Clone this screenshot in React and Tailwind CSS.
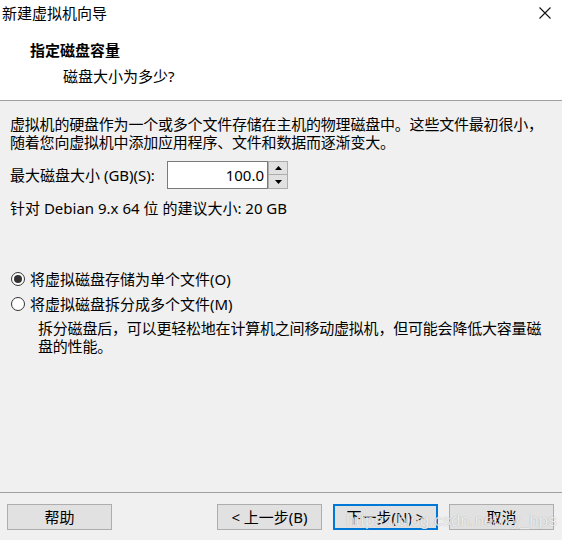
import React, { useState } from "react";

const font = { fontFamily: '"Noto Sans", "Noto Sans CJK SC", sans-serif' };

const Radio = ({ checked, label, onClick }) => (
  <div onClick={onClick} className="flex flex-row items-center h-[20px] cursor-default">
    <div className="ml-[1px] w-[14px] h-[14px] rounded-full border border-[#333333] bg-white flex items-center justify-center">
      {checked && <div className="w-[8px] h-[8px] rounded-full bg-[#333333]" />}
    </div>
    <span className="ml-[5px] text-[15px] leading-[20px] text-black">{label}</span>
  </div>
);

const Button = ({ children, primary }) => (
  <div
    className={
      "w-[105px] h-[26px] flex items-center justify-center text-[15px] text-black bg-[#e1e1e1] " +
      (primary ? "border-2 border-[#0078d7]" : "border border-[#adadad]")
    }
  >
    {children}
  </div>
);

const App = () => {
  const [split, setSplit] = useState(false);
  const [size, setSize] = useState("100.0");

  return (
    <div style={font} className="w-[562px] h-[540px] flex flex-col bg-[#f0f0f0] text-black relative overflow-hidden">
      {/* header */}
      <div className="h-[101px] bg-white border-b border-[#a0a0a0] flex flex-col">
        <div className="h-[26px] flex flex-row items-center justify-between">
          <span className="ml-[2px] text-[15px] leading-[26px]">新建虚拟机向导</span>
          <svg className="mr-[11px]" width="12" height="12" viewBox="0 0 12 12">
            <path d="M0.5 0.5 L11.5 11.5 M11.5 0.5 L0.5 11.5" stroke="#111" strokeWidth="1.1" fill="none" />
          </svg>
        </div>
        <div className="ml-[30px] mt-[14px] text-[15px] leading-[20px] font-bold">指定磁盘容量</div>
        <div className="ml-[63px] mt-[6px] text-[15px] leading-[20px]">磁盘大小为多少?</div>
      </div>

      {/* body */}
      <div className="flex-1 px-[10px] pt-[14px] flex flex-col">
        <div className="text-[15px] leading-[18px] tracking-[-0.2px]">
          虚拟机的硬盘作为一个或多个文件存储在主机的物理磁盘中。这些文件最初很小，
          <br />
          随着您向虚拟机中添加应用程序、文件和数据而逐渐变大。
        </div>

        <div className="mt-[10px] flex flex-row items-center h-[28px]">
          <span className="w-[157px] shrink-0 text-[15px] leading-[18px]">最大磁盘大小 (GB)(S):</span>
          <input
            value={size}
            onChange={(e) => setSize(e.target.value)}
            className="w-[101px] h-[28px] border border-[#7a7a7a] bg-white text-right pr-[3px] text-[15px] outline-none"
          />
          <div className="w-[20px] h-[28px] flex flex-col">
            <div className="h-[14px] bg-[#e1e1e1] border border-[#adadad] flex items-center justify-center">
              <svg width="7" height="4" viewBox="0 0 7 4"><path d="M3.5 0 L7 4 L0 4 Z" fill="#000" /></svg>
            </div>
            <div className="h-[14px] bg-[#e1e1e1] border border-t-0 border-[#adadad] flex items-center justify-center">
              <svg width="7" height="4" viewBox="0 0 7 4"><path d="M0 0 L7 0 L3.5 4 Z" fill="#000" /></svg>
            </div>
          </div>
        </div>

        <div className="mt-[10px] text-[15px] leading-[18px]">针对 Debian 9.x 64 位 的建议大小: 20 GB</div>

        <div className="mt-[52px] flex flex-col space-y-[5px]">
          <Radio checked={!split} label="将虚拟磁盘存储为单个文件(O)" onClick={() => setSplit(false)} />
          <Radio checked={split} label="将虚拟磁盘拆分成多个文件(M)" onClick={() => setSplit(true)} />
        </div>
        <div className="ml-[28px] mt-[5px] text-[15px] leading-[18px] tracking-[-0.2px]">
          拆分磁盘后，可以更轻松地在计算机之间移动虚拟机，但可能会降低大容量磁
          <br />
          盘的性能。
        </div>
      </div>

      {/* footer */}
      <div className="h-[48px] border-t border-[#a0a0a0] flex flex-row pt-[11px] pl-[7px] pr-[8px]">
        <Button>帮助</Button>
        <div className="ml-auto flex flex-row space-x-[11px]">
          <Button>&lt; 上一步(B)</Button>
          <Button primary>下一步(N) &gt;</Button>
          <Button>取消</Button>
        </div>
      </div>

      {/* watermark */}
      <div
        className="absolute left-[346px] top-[510px] text-[17px] leading-[22px] text-white/80 pointer-events-none"
        style={{ fontFamily: '"Liberation Sans", sans-serif', textShadow: "0 0 1px rgba(0,0,0,0.35)" }}
      >
        https://blog.csdn.net/xy_hps
      </div>
    </div>
  );
};

export default App;
